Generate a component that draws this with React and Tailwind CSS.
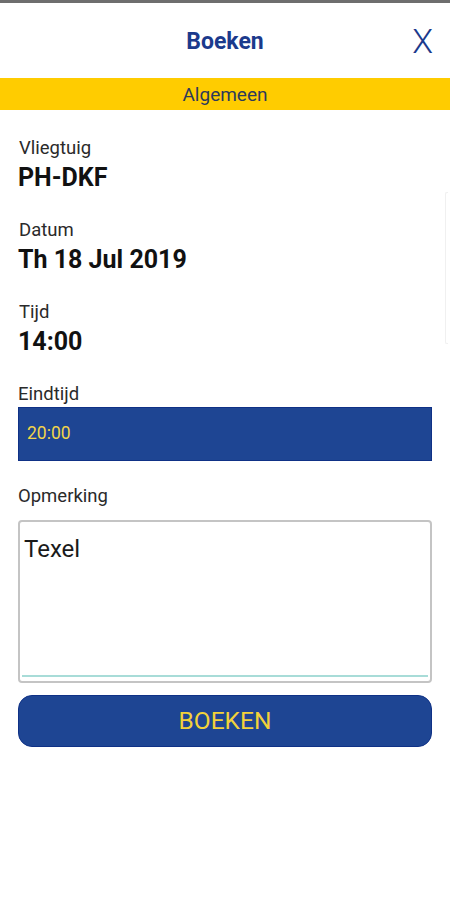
export default function App() {
  const font = { fontFamily: 'Roboto, "Noto Sans", sans-serif' };
  return (
    <div className="relative w-[450px] h-[900px] bg-white overflow-hidden" style={font}>
      <div className="h-[3px] bg-[#6e6e6e]" />
      <div className="relative h-[75px] flex items-center justify-center">
        <span className="mt-[2px] text-[23px] font-bold text-[#1b3a8c] leading-none">Boeken</span>
        <span className="absolute right-[17px] top-[21px] text-[34px] leading-none font-light text-[#1b3a8c]">X</span>
      </div>
      <div className="h-[32px] bg-[#ffcc00] flex items-center justify-center">
        <span className="text-[19px] text-[#2d3a5c] leading-none">Algemeen</span>
      </div>
      <div className="px-[18px] pt-[28px] flex flex-col">
        <div className="text-[18.5px] leading-[20px] text-[#2a2a2a] pl-px">Vliegtuig</div>
        <div className="mt-[6px] text-[25px] leading-[28px] font-bold text-[#111]">PH-DKF</div>
        <div className="mt-[28px] text-[18.5px] leading-[20px] text-[#2a2a2a] pl-px">Datum</div>
        <div className="mt-[6px] text-[25px] leading-[28px] font-bold text-[#111]">Th 18 Jul 2019</div>
        <div className="mt-[28px] text-[18.5px] leading-[20px] text-[#2a2a2a] pl-px">Tijd</div>
        <div className="mt-[6px] text-[25px] leading-[28px] font-bold text-[#111]">14:00</div>
        <div className="mt-[28px] text-[18.5px] leading-[20px] text-[#2a2a2a]">Eindtijd</div>
        <div className="mt-[3px] h-[54px] bg-[#1e4593] border border-[#0f3186] flex items-center pl-[8px]">
          <span className="text-[17.5px] text-[#f2d54a] leading-none">20:00</span>
        </div>
        <div className="mt-[25px] text-[18.5px] leading-[20px] text-[#2a2a2a]">Opmerking</div>
        <div className="mt-[14px] h-[163px] rounded-[4px] border-2 border-[#c4c4c4] flex flex-col px-[2px] pb-[4px]">
          <div className="flex-1 pt-[14px] pl-[2px] text-[24px] leading-[26px] text-[#1a1a1a]">Texel</div>
          <div className="h-[2px] bg-[#a8dcd8]" />
        </div>
        <button className="mt-[12px] h-[52px] rounded-[14px] bg-[#1e4593] border border-[#0f3186] flex items-center justify-center">
          <span className="text-[24.5px] text-[#f2d23a] leading-none">BOEKEN</span>
        </button>
      </div>
      <div className="absolute right-[2px] top-[192px] w-[3px] h-[152px] border-l border-y border-[#f0f0f0] rounded-l-[2px]" />
    </div>
  );
}
